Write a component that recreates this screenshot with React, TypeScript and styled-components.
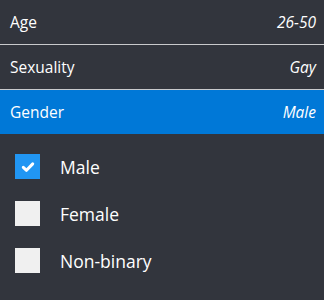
import styled, { createGlobalStyle } from 'styled-components';

const GlobalStyle = createGlobalStyle`
  body {
    margin: 0;
    background: #32353d;
    font-family: "Open Sans", "Noto Sans", sans-serif;
  }
`;

type Filter = { label: string; value: string; active?: boolean };

const filters: Filter[] = [
  { label: 'Age', value: '26-50' },
  { label: 'Sexuality', value: 'Gay' },
  { label: 'Gender', value: 'Male', active: true },
];

const options = [
  { label: 'Male', checked: true },
  { label: 'Female', checked: false },
  { label: 'Non-binary', checked: false },
];

export default function App(): JSX.Element {
  return (
    <>
      <GlobalStyle />
      <Panel>
        {filters.map((f, i) => (
          <FilterRow key={f.label} $active={f.active} $last={i === filters.length - 1}>
            <span>{f.label}</span>
            <Value>{f.value}</Value>
          </FilterRow>
        ))}
        <Options>
          {options.map((o) => (
            <Option key={o.label}>
              <Box $checked={o.checked}>
                {o.checked && (
                  <svg width="14" height="14" viewBox="0 0 14 14">
                    <path
                      d="M2.3 7.3 L5.5 10.3 L11.7 3.9"
                      fill="none"
                      stroke="#fff"
                      strokeWidth="3"
                      strokeLinecap="round"
                      strokeLinejoin="round"
                    />
                  </svg>
                )}
              </Box>
              <OptionLabel>{o.label}</OptionLabel>
            </Option>
          ))}
        </Options>
      </Panel>
    </>
  );
}

const Panel = styled.div`
  width: 324px;
  height: 300px;
  background: #32353d;
  color: #fff;
`;

const FilterRow = styled.div<{ $active?: boolean; $last?: boolean }>`
  display: flex;
  align-items: center;
  justify-content: space-between;
  height: 44px;
  padding: 0 8px 0 10px;
  font-size: 15.5px;
  background: ${(p) => (p.$active ? '#0078d7' : 'transparent')};
  border-bottom: ${(p) => (p.$last ? 'none' : '1px solid #c9cacc')};
`;

const Value = styled.span`
  font-style: italic;
`;

const Options = styled.div`
  display: flex;
  flex-direction: column;
  gap: 22px;
  padding: 20px 0 0 15px;
`;

const Option = styled.label`
  display: flex;
  align-items: center;
  height: 25px;
`;

const Box = styled.span<{ $checked?: boolean }>`
  display: flex;
  align-items: center;
  justify-content: center;
  width: 25px;
  height: 25px;
  background: ${(p) => (p.$checked ? '#2196f3' : '#f0f0f0')};
`;

const OptionLabel = styled.span`
  margin-left: 20px;
  font-size: 17.5px;
  color: #fff;
`;
